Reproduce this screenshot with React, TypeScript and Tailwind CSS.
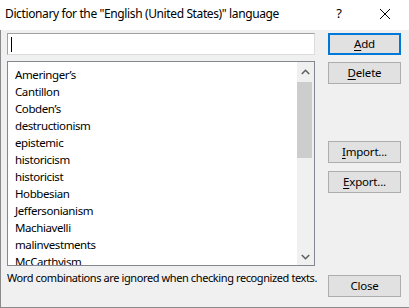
import React from "react";

const words = [
  "Ameringer\u2019s",
  "Cantillon",
  "Cobden\u2019s",
  "destructionism",
  "epistemic",
  "historicism",
  "historicist",
  "Hobbesian",
  "Jeffersonianism",
  "Machiavelli",
  "malinvestments",
  "McCarthyism",
];

function Btn({
  children,
  primary,
  className = "",
}: {
  children: React.ReactNode;
  primary?: boolean;
  className?: string;
}) {
  return (
    <div
      className={
        "h-[22px] w-[73px] flex items-center justify-center bg-[#e1e1e1] text-[11.5px] tracking-[-0.2px] text-black " +
        (primary ? "border-2 border-[#0078d7] " : "border border-[#adadad] ") +
        className
      }
    >
      {children}
    </div>
  );
}

export default function App() {
  return (
    <div
      className="w-[409px] h-[308px] flex flex-col overflow-hidden bg-[#f0f0f0] text-black"
      style={{ fontFamily: '"Noto Sans", "Liberation Sans", sans-serif' }}
    >
      <div className="h-[30px] shrink-0 bg-white flex items-center pb-[3px] text-[12px]">
        <span className="pl-[5px] tracking-[-0.38px]">Dictionary for the "English (United States)" language</span>
        <span className="ml-auto mr-[38px] text-[13px]">?</span>
        <svg width="10" height="10" viewBox="0 0 10 10" className="mr-[19px]">
          <path d="M0 0 L10 10 M10 0 L0 10" stroke="#000" strokeWidth="1" />
        </svg>
      </div>
      <div className="flex-1 flex border-l border-b border-[#8a8a8a] pl-[6px] pt-[3px]">
        <div className="w-[308px] flex flex-col">
          <div className="h-[22px] bg-white border border-t-[#a0a0a0] border-l-[#a0a0a0] border-r-[#dcdcdc] border-b-[#dcdcdc] flex items-center pl-[3px]">
            <div className="w-px h-[15px] bg-black" />
          </div>
          <div className="mt-[6px] h-[205px] border border-[#828790] bg-white flex">
            <div className="flex-1 pl-[7px] pt-[4px] overflow-hidden text-[11.5px] tracking-[-0.4px]">
              {words.map((w) => (
                <div key={w} className="h-[17px] leading-[17px] whitespace-nowrap">
                  {w}
                </div>
              ))}
            </div>
            <div className="w-[17px] flex flex-col bg-[#f0f0f0]">
              <div className="h-[19px] flex items-center justify-center">
                <svg width="9" height="6" viewBox="0 0 9 6">
                  <path d="M0.8 5 L4.5 1.3 L8.2 5" stroke="#606060" strokeWidth="1.6" fill="none" />
                </svg>
              </div>
              <div className="mt-[1px] h-[76px] w-[15px] bg-[#cdcdcd]" />
              <div className="flex-1" />
              <div className="h-[17px] flex items-center justify-center">
                <svg width="9" height="6" viewBox="0 0 9 6">
                  <path d="M0.8 1 L4.5 4.7 L8.2 1" stroke="#606060" strokeWidth="1.6" fill="none" />
                </svg>
              </div>
            </div>
          </div>
          <div className="mt-[4px] h-[16px] leading-[16px] text-[11px] tracking-[-0.4px] whitespace-nowrap">
            Word combinations are ignored when checking recognized texts.
          </div>
        </div>
        <div className="ml-[13px] w-[73px] flex flex-col">
          <Btn primary>
            <span><u className="underline-offset-2">A</u>dd</span>
          </Btn>
          <Btn className="mt-[7px]">
            <span><u className="underline-offset-2">D</u>elete</span>
          </Btn>
          <Btn className="mt-[57px]">
            <span><u className="underline-offset-2">I</u>mport...</span>
          </Btn>
          <Btn className="mt-[8px]">
            <span><u className="underline-offset-2">E</u>xport...</span>
          </Btn>
          <Btn className="mt-[82px]">
            <span>Close</span>
          </Btn>
        </div>
      </div>
    </div>
  );
}
